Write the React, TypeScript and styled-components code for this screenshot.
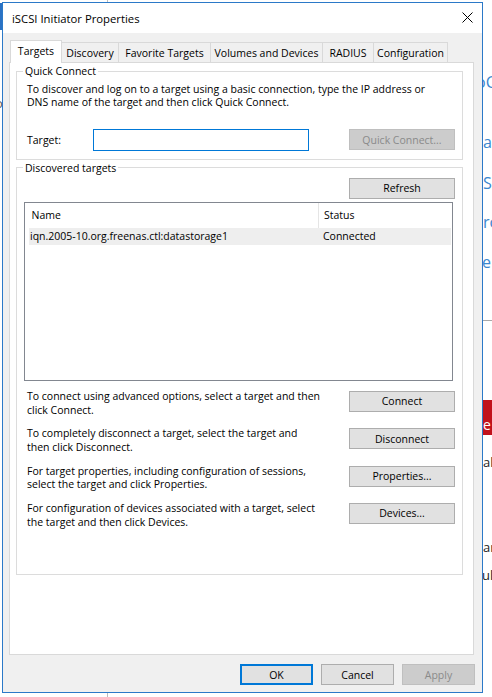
import React from "react";
import styled, { createGlobalStyle } from "styled-components";

const GlobalStyle = createGlobalStyle`
  html, body { margin: 0; padding: 0; background: #ffffff; }
  body { font-family: "Open Sans", "Noto Sans", sans-serif; font-size: 10.5px; color: #000; }
  * { box-sizing: border-box; }
`;

const Desktop = styled.div`
  position: relative;
  width: 492px;
  height: 697px;
  overflow: hidden;
  background: #ffffff;
`;

const BgBlock = styled.div<{ $x: number; $y: number; $w: number; $h: number; $c: string }>`
  position: absolute;
  left: ${(p) => p.$x}px;
  top: ${(p) => p.$y}px;
  width: ${(p) => p.$w}px;
  height: ${(p) => p.$h}px;
  background: ${(p) => p.$c};
`;

const BgText = styled.span<{ $x: number; $y: number; $c: string; $s: number }>`
  position: absolute;
  left: ${(p) => p.$x}px;
  top: ${(p) => p.$y}px;
  color: ${(p) => p.$c};
  font-size: ${(p) => p.$s}px;
  line-height: 1;
  white-space: nowrap;
`;

const Window = styled.div`
  position: absolute;
  left: 2px;
  top: 2px;
  width: 481px;
  height: 691px;
  border: 1px solid #2b79c8;
  background: #f0f0f0;
  display: flex;
  flex-direction: column;
`;

const TitleBar = styled.div`
  height: 30px;
  flex: none;
  background: #ffffff;
  display: flex;
  align-items: center;
  justify-content: space-between;
  padding: 0 9px 0 9px;
`;

const Title = styled.span`
  font-size: 11.3px;
  color: #000;
`;

const CloseBtn = styled.svg`
  width: 11px;
  height: 11px;
  display: block;
  margin-top: -1px;
`;

const Body = styled.div`
  flex: 1;
  display: flex;
  flex-direction: column;
  padding: 7px 8px 7px 6px;
  min-height: 0;
`;

const TabStrip = styled.div`
  height: 22px;
  flex: none;
  display: flex;
  align-items: flex-end;
  padding-left: 1px;
`;

const Tab = styled.div<{ $active?: boolean; $w: number }>`
  width: ${(p) => p.$w}px;
  height: ${(p) => (p.$active ? 23 : 20)}px;
  margin-bottom: ${(p) => (p.$active ? -1 : 0)}px;
  margin-left: -1px;
  &:first-child { margin-left: 0; }
  position: relative;
  z-index: ${(p) => (p.$active ? 2 : 1)};
  background: ${(p) => (p.$active ? "#ffffff" : "#f0f0f0")};
  border: 1px solid #d9d9d9;
  border-bottom: none;
  display: flex;
  align-items: center;
  justify-content: center;
  padding-bottom: ${(p) => (p.$active ? 3 : 0)}px;
  white-space: nowrap;
`;

const Panel = styled.div`
  flex: 1;
  background: #ffffff;
  border: 1px solid #d9d9d9;
  display: flex;
  flex-direction: column;
  padding: 1px 10px 0 6px;
  min-height: 0;
`;

const GroupBox = styled.fieldset<{ $gap?: number }>`
  margin: ${(p) => p.$gap ?? 0}px 0 0 0;
  padding: 0;
  border: 1px solid #dcdcdc;
  min-width: 0;
`;

const Legend = styled.legend`
  margin-left: 6px;
  padding: 0 2px;
  line-height: 14px;
  font-size: 10.5px;
`;

const GroupContent = styled.div<{ $pad: string }>`
  display: flex;
  flex-direction: column;
  padding: ${(p) => p.$pad};
`;

const Desc = styled.p<{ $lh?: number }>`
  margin: 0;
  line-height: ${(p) => p.$lh ?? 13.4}px;
  white-space: nowrap;
`;

const TargetRow = styled.div`
  display: flex;
  align-items: center;
  margin-top: 19px;
`;

const FieldLabel = styled.label`
  width: 66px;
  flex: none;
`;

const TextInput = styled.input`
  width: 216px;
  height: 22px;
  border: 1px solid #0078d7;
  background: #fff;
  outline: none;
  padding: 0 3px;
  font: inherit;
`;

const Button = styled.button<{ $w: number; $default?: boolean }>`
  width: ${(p) => p.$w}px;
  height: 21px;
  flex: none;
  padding: 0;
  font-family: "Open Sans", "Noto Sans", sans-serif;
  font-size: 10.5px;
  color: #000;
  background: #e1e1e1;
  border: ${(p) => (p.$default ? "2px solid #0078d7" : "1px solid #adadad")};
  &:disabled {
    background: #cccccc;
    border-color: #bfbfbf;
    color: #8a8a8a;
  }
`;

const PushRight = styled.div`
  margin-left: auto;
  display: flex;
`;

const ListBox = styled.div`
  margin-top: 3px;
  margin-right: 2px;
  height: 179px;
  border: 1px solid #828790;
  background: #fff;
  display: flex;
  flex-direction: column;
`;

const ListHeader = styled.div`
  display: grid;
  grid-template-columns: 294px 1fr;
  height: 25px;
`;

const HeaderCell = styled.div<{ $sep?: boolean }>`
  display: flex;
  align-items: center;
  padding-left: ${(p) => (p.$sep ? 6.5 : 5)}px;
  border-right: ${(p) => (p.$sep ? "1px solid #e5e5e5" : "none")};
  padding-bottom: 1px;
`;

const ListRow = styled.div<{ $selected?: boolean }>`
  display: grid;
  grid-template-columns: 294px 1fr;
  height: 17px;
  margin: 0 1px 0 4px;
  background: ${(p) => (p.$selected ? "#eeeeee" : "transparent")};
  align-items: center;
`;

const RowCell = styled.div<{ $first?: boolean }>`
  padding-left: ${(p) => (p.$first ? 1 : 0)}px;
  white-space: nowrap;
`;

const Actions = styled.div`
  margin-top: 10px;
  display: flex;
  flex-direction: column;
  gap: 10px;
`;

const ActionRow = styled.div`
  height: 27.4px;
  display: flex;
  align-items: flex-start;
  justify-content: space-between;
  padding-left: 3px;
`;

const Footer = styled.div`
  flex: none;
  display: flex;
  justify-content: flex-end;
  gap: 8px;
  margin-top: 9px;
  margin-right: -1px;
`;

const tabs = [
  { label: "Targets", w: 52, active: true },
  { label: "Discovery", w: 58 },
  { label: "Favorite Targets", w: 93 },
  { label: "Volumes and Devices", w: 113 },
  { label: "RADIUS", w: 52 },
  { label: "Configuration", w: 75 },
];

const actions = [
  { text: ["To connect using advanced options, select a target and then", "click Connect."], btn: "Connect" },
  { text: ["To completely disconnect a target, select the target and", "then click Disconnect."], btn: "Disconnect" },
  { text: ["For target properties, including configuration of sessions,", "select the target and click Properties."], btn: "Properties..." },
  { text: ["For configuration of devices associated with a target, select", "the target and then click Devices."], btn: "Devices..." },
];

export default function App() {
  return (
    <Desktop>
      <GlobalStyle />
      <BgBlock $x={0} $y={3} $w={2} $h={27} $c="#2a72c4" />
      <BgBlock $x={107} $y={0} $w={1} $h={697} $c="#bdbdbd" />
      <BgText $x={-5} $y={97} $c="#555" $s={13}>o</BgText>
      <BgText $x={476} $y={74} $c="#3a87cf" $s={16}>oC</BgText>
      <BgText $x={483} $y={134} $c="#3a87cf" $s={16}>at</BgText>
      <BgText $x={483} $y={175} $c="#3a87cf" $s={16}>S</BgText>
      <BgText $x={483} $y={214} $c="#3a87cf" $s={16}>ro</BgText>
      <BgText $x={482} $y={254} $c="#3a87cf" $s={16}>e</BgText>
      <BgBlock $x={483} $y={320} $w={9} $h={1} $c="#a8a8a8" />
      <BgBlock $x={483} $y={400} $w={9} $h={35} $c="#c1121c" />
      <BgText $x={483} $y={418} $c="#ffffff" $s={14}>e</BgText>
      <BgText $x={483} $y={456} $c="#222" $s={13}>al</BgText>
      <BgText $x={483} $y={541} $c="#222" $s={13}>ar</BgText>
      <BgText $x={482} $y={569} $c="#222" $s={13}>ult</BgText>

      <Window>
        <TitleBar>
          <Title>iSCSI Initiator Properties</Title>
          <CloseBtn viewBox="0 0 11 11">
            <path d="M0.5 0.5 L10.5 10.5 M10.5 0.5 L0.5 10.5" stroke="#000" strokeWidth="1" fill="none" />
          </CloseBtn>
        </TitleBar>
        <Body>
          <TabStrip>
            {tabs.map((t) => (
              <Tab key={t.label} $w={t.w} $active={t.active}>
                {t.label}
              </Tab>
            ))}
          </TabStrip>
          <Panel>
            <GroupBox>
              <Legend>Quick Connect</Legend>
              <GroupContent $pad="5px 7px 8px 10px">
                <Desc>
                  To discover and log on to a target using a basic connection, type the IP address or
                  <br />
                  DNS name of the target and then click Quick Connect.
                </Desc>
                <TargetRow>
                  <FieldLabel>Target:</FieldLabel>
                  <TextInput />
                  <PushRight>
                    <Button $w={106} disabled>
                      Quick Connect...
                    </Button>
                  </PushRight>
                </TargetRow>
              </GroupContent>
            </GroupBox>
            <GroupBox $gap={1}>
              <Legend>Discovered targets</Legend>
              <GroupContent $pad="3px 7px 44px 7px">
                <PushRight>
                  <Button $w={106}>Refresh</Button>
                </PushRight>
                <ListBox>
                  <ListHeader>
                    <HeaderCell $sep>Name</HeaderCell>
                    <HeaderCell>Status</HeaderCell>
                  </ListHeader>
                  <ListRow $selected>
                    <RowCell $first>iqn.2005-10.org.freenas.ctl:datastorage1</RowCell>
                    <RowCell>Connected</RowCell>
                  </ListRow>
                </ListBox>
                <Actions>
                  {actions.map((a) => (
                    <ActionRow key={a.btn}>
                      <Desc $lh={13.7} style={{ marginTop: -1 }}>
                        {a.text[0]}
                        <br />
                        {a.text[1]}
                      </Desc>
                      <Button $w={106}>{a.btn}</Button>
                    </ActionRow>
                  ))}
                </Actions>
              </GroupContent>
            </GroupBox>
          </Panel>
          <Footer>
            <Button $w={73} $default>
              OK
            </Button>
            <Button $w={73}>Cancel</Button>
            <Button $w={73} disabled>
              Apply
            </Button>
          </Footer>
        </Body>
      </Window>
    </Desktop>
  );
}
